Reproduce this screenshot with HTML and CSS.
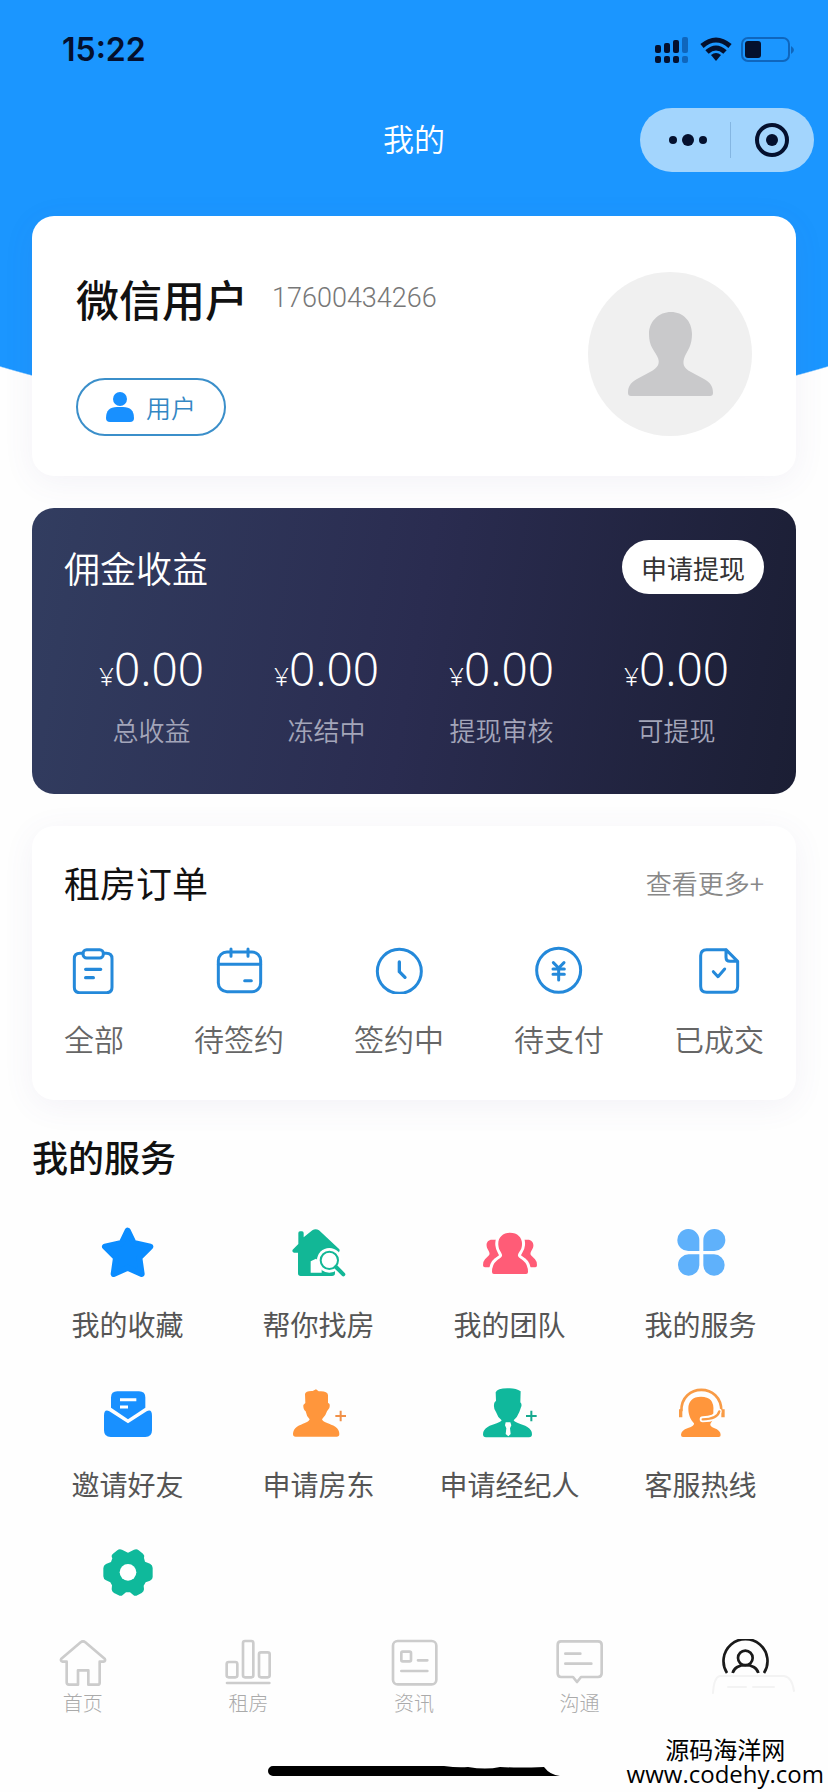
FILE: index.html
```html
<!DOCTYPE html>
<html lang="zh-CN">
<head>
<meta charset="utf-8">
<meta name="viewport" content="width=device-width, initial-scale=1">
<title>我的</title>
<link rel="stylesheet" href="styles.css">
</head>
<body>
<div class="page">
  <header>
    <div class="status">
      <time class="clock">15:22</time>
      <svg class="status-icons" viewBox="652 34 144 32" aria-hidden="true">
        <g fill="#04102e">
          <rect x="655" y="45" width="6" height="8" rx="2"/><rect x="664" y="43" width="6" height="10" rx="2"/><rect x="673" y="40" width="6" height="13" rx="2"/>
          <rect x="655" y="56" width="6" height="7" rx="2"/><rect x="664" y="56" width="6" height="7" rx="2"/><rect x="673" y="56" width="6" height="7" rx="2"/>
          <path d="M716 61l-5-6q5-4 10 0z"/>
          <rect x="745" y="41" width="16" height="17" rx="3"/>
        </g>
        <g fill="#0f66bd"><rect x="682" y="37" width="6" height="16" rx="2"/><rect x="682" y="56" width="6" height="7" rx="2"/><path d="M791 46q6 4 0 8z"/></g>
        <path d="M702 46q14-12 28 0M707 52q9-8 18 0" fill="none" stroke="#04102e" stroke-width="5"/>
        <rect x="742" y="38" width="47" height="23" rx="6" fill="none" stroke="#0f66bd" stroke-width="2"/>
      </svg>
    </div>
    <div class="nav">
      <h1 class="nav-title">我的</h1>
      <div class="capsule">
        <button class="capsule-btn capsule-more" type="button" aria-label="更多">
          <svg viewBox="0 0 40 16" width="40" height="16"><circle cx="5" cy="8" r="4"/><circle cx="20" cy="8" r="6"/><circle cx="35" cy="8" r="4"/></svg>
        </button>
        <button class="capsule-btn capsule-close" type="button" aria-label="关闭">
          <svg viewBox="0 0 36 36" width="36" height="36"><circle cx="18" cy="18" r="15" fill="none" stroke="#04102e" stroke-width="4"/><circle cx="18" cy="18" r="6"/></svg>
        </button>
      </div>
    </div>
  </header>

  <main class="content">
    <section class="card profile">
      <div class="profile-info">
        <div class="profile-line"><h2 class="name">微信用户</h2><span class="phone">17600434266</span></div>
        <button class="role" type="button">
          <svg viewBox="0 0 28 30" width="28" height="30"><circle cx="14" cy="7" r="7"/><path d="M0 26Q0 15 11 15H17Q28 15 28 26Q28 30 24 30H4Q0 30 0 26Z"/></svg>
          用户
        </button>
      </div>
      <svg class="avatar" viewBox="0 0 164 164" role="img" aria-label="头像"><circle cx="82" cy="82" r="82" fill="#f0f0f0"/><path d="M83 40C71 40 61 49 61 62C61 74 66 78 69 84C73 91 70 96 62 100L49 107C42 111 40 115 40 121Q40 124 43 124H122Q125 124 125 121C125 115 123 111 116 107L103 100C95 96 94 91 97 84C100 78 104 73 104 62C104 49 95 40 83 40Z" fill="#c9c9cb"/></svg>
    </section>

    <section class="wallet">
      <div class="section-head"><h2 class="section-title">佣金收益</h2><button class="withdraw" type="button">申请提现</button></div>
      <dl class="amounts">
        <div class="amount"><dd><small>¥</small>0.00</dd><dt>总收益</dt></div>
        <div class="amount"><dd><small>¥</small>0.00</dd><dt>冻结中</dt></div>
        <div class="amount"><dd><small>¥</small>0.00</dd><dt>提现审核</dt></div>
        <div class="amount"><dd><small>¥</small>0.00</dd><dt>可提现</dt></div>
      </dl>
    </section>

    <section class="card orders">
      <div class="section-head"><h2 class="section-title">租房订单</h2><a class="more" href="#">查看更多+</a></div>
      <nav class="order-list">
        <a class="order" href="#">
          <svg viewBox="90 75 144 144"><path d="M129 97H120Q103 97 103 113V199Q103 215 119 215H200Q216 215 216 199V113Q216 97 199 97H190"/><rect x="129" y="86" width="61" height="25" rx="11"/><path d="M137 145H182M137 170H160" stroke-width="10"/></svg>
          全部</a>
        <a class="order" href="#">
          <svg viewBox="525 75 144 144"><rect x="535" y="93" width="127" height="119" rx="26"/><path d="M535 130H662M573 84V106M624 84V106M614 179H634" stroke-width="9"/></svg>
          待签约</a>
        <a class="order" href="#">
          <svg viewBox="1005 75 144 144"><circle cx="1078" cy="151" r="66"/><path d="M1078 123V152L1095 169" stroke-width="10"/></svg>
          签约中</a>
        <a class="order" href="#">
          <svg viewBox="345 75 144 144"><circle cx="416" cy="148" r="66"/><path d="M400 125L416 141L432 125M416 141V177M399 144H433M399 160H433"/></svg>
          待支付</a>
        <a class="order" href="#">
          <svg viewBox="825 75 144 144"><path d="M918 86H860Q842 86 842 104V196Q842 214 860 214H935Q953 214 953 196V121L918 86V109Q918 121 930 121H953M880 152L894 167L914 144"/></svg>
          已成交</a>
      </nav>
    </section>

    <section class="services">
      <h2 class="services-title">我的服务</h2>
      <nav class="service-grid">
        <a class="service" href="#">
          <svg viewBox="180 72 168 168"><path d="M263 92L281 129L331 140L298 173L305 222L263 203L221 222L228 173L195 140L245 129Z" fill="#0a8cff" stroke="#0a8cff" stroke-width="18" stroke-linejoin="round"/></svg>
          我的收藏</a>
        <a class="service" href="#">
          <svg viewBox="753 72 168 168"><path d="M775 99Q775 94 780 94H786Q791 94 791 99V112L817 91Q827 84 837 91L898 148Q901 154 895 158H885V220Q885 228 876 228H782Q774 228 774 220V158H762Q755 156 758 149L775 132Z" fill="#12b796"/><path d="M812 218V184L828 176L845 190V218Z" fill="#fff"/><circle cx="868" cy="181" r="37" fill="#fff"/><path d="M885 196L914 226" stroke="#fff" stroke-width="22"/><circle cx="868" cy="181" r="26" fill="#fff" stroke="#12b796" stroke-width="6"/><path d="M888 201L910 223" stroke="#12b796" stroke-width="12" stroke-linecap="round"/></svg>
          帮你找房</a>
        <a class="service" href="#">
          <svg viewBox="186 72 168 168" fill="#ff5c77"><path d="M216 119C202 119 197 131 201 143C204 152 212 157 207 166L195 178Q189 184 189 196Q189 202 195 202H346Q351 202 351 196Q351 184 345 178L333 166C328 157 336 152 339 143C343 131 337 119 323 119Z"/><path d="M270 98C247 98 233 114 235 135C236 151 244 156 246 164C248 172 237 176 230 182Q216 193 216 216Q216 222 222 222H318Q324 222 324 216Q324 193 310 182C303 176 292 172 294 164C296 156 305 151 306 135C308 114 294 98 270 98Z" stroke="#fff" stroke-width="18" paint-order="stroke"/></svg>
          我的团队</a>
        <a class="service" href="#">
          <svg viewBox="757 72 168 168" fill="#5fb1fb"><path d="M836 153H805A33 33 0 1 1 836 120ZM848 153V120A33 33 0 1 1 880 153ZM836 163V196A32 32 0 1 1 805 163ZM848 163H880A32 32 0 1 1 848 196Z"/></svg>
          我的服务</a>
        <a class="service" href="#">
          <svg viewBox="180 72 168 168" fill="#1890ff"><path d="M213 143V113Q213 94 232 94H297Q316 94 316 113V143L264 178Z"/><path d="M240 119H289M240 141H264" stroke="#fff" stroke-width="9"/><path d="M192 168Q192 146 208 154L264 190L320 154Q336 146 336 168V211Q336 231 316 231H212Q192 231 192 211Z"/></svg>
          邀请好友</a>
        <a class="service" href="#">
          <svg viewBox="753 72 168 168" fill="#ff963c"><path d="M795 102Q797 92 818 93L828 88L836 94Q862 92 864 105V129Q872 130 868 144L861 154Q858 166 846 178C850 188 870 191 886 200Q898 208 898 222Q898 230 890 230H767Q759 230 759 222Q759 208 771 200C787 191 805 188 809 178Q799 168 797 154Q789 148 790 135L796 129Z"/><path d="M886 168H918M902 152V184" stroke="#f09048" stroke-width="6"/></svg>
          申请房东</a>
        <a class="service" href="#">
          <svg viewBox="186 72 168 168" fill="#10b89c"><path d="M227 97Q232 85 262 85Q286 83 302 94L301 127Q307 132 303 142L298 156Q292 172 281 181C286 190 306 191 322 201Q336 209 336 223Q336 232 327 232H198Q189 232 189 223Q189 209 203 201C219 191 240 190 245 181Q233 172 228 156Q219 145 223 128L228 122Z"/><path d="M257 187H271L274 196L270 205L272 222L265 229L257 222L259 205L255 196Z" fill="#fff"/><path d="M318 168H350M334 152V184" stroke="#16a98e" stroke-width="6"/></svg>
          申请经纪人</a>
        <a class="service" href="#">
          <svg viewBox="757 72 168 168" fill="#ff963c"><path d="M841 110C816 110 803 124 803 145C803 165 809 178 820 190Q822 198 802 204Q781 211 781 225Q781 231 787 231H894Q900 231 900 225Q900 211 880 204Q865 198 870 190L878 178V153Q882 110 841 110Z"/><path d="M782 154C780 68 904 68 902 154" fill="none" stroke="#f89b46" stroke-width="8"/><path d="M780 148V172M907 148V172" stroke="#f89b46" stroke-width="10"/><path d="M894 154Q888 178 846 178" fill="none" stroke="#fff" stroke-width="18" stroke-linecap="round"/><path d="M896 154Q890 178 846 178" fill="none" stroke="#f89b46" stroke-width="7" stroke-linecap="round"/></svg>
          客服热线</a>
        <a class="service" href="#" aria-label="设置">
          <svg viewBox="180 552 168 168"><path d="M232 571Q238 565 246 569L264 578L282 569Q290 565 296 571L309 581Q315 586 312 594L315 605L330 611Q338 615 338 624V651Q338 659 330 662L317 667L311 677L312 688Q312 694 305 699L292 706Q285 710 279 704L270 697H258L249 704Q243 710 236 706L222 699Q215 694 215 688L216 676L211 667L198 661Q190 657 190 649V625Q190 616 198 612L213 606L217 595Q212 586 219 581Z" fill="#0fb99b"/><circle cx="264" cy="637" r="25" fill="#fff"/></svg>
        </a>
      </nav>
    </section>
  </main>

  <footer class="tabbar">
    <nav class="tabs">
      <a class="tab" href="#"><svg viewBox="176 88 144 144"><path d="M248 95Q252 95 255 98L313 147Q317 155 309 156H298V219Q298 225 292 225H264V182H233V225H206Q199 225 199 218V156H187Q179 154 183 147L241 98Q244 95 248 95Z"/></svg>首页</a>
      <a class="tab" href="#"><svg viewBox="673 88 144 144"><rect x="681" y="157" width="32" height="46" rx="6"/><rect x="730" y="94" width="31" height="109" rx="6"/><rect x="778" y="128" width="32" height="75" rx="6"/><path d="M682 220H809"/></svg>租房</a>
      <a class="tab" href="#"><svg viewBox="1170 88 144 144"><rect x="1179" y="94" width="130" height="130" rx="14"/><rect x="1204" y="126" width="29" height="29" rx="4"/><path d="M1254 152H1282M1204 184H1282"/></svg>资讯</a>
      <a class="tab" href="#"><svg viewBox="443 88 144 144"><path d="M458 95H569Q580 95 580 106V191Q580 202 569 202H518L506 217L494 202H458Q448 202 448 191V106Q448 95 458 95ZM471 132H516M471 162H549"/></svg>沟通</a>
      <a class="tab" href="#" aria-label="我的" aria-current="page"><svg class="tab-me" viewBox="940 88 144 144"><path d="M958 190A66 66 0 1 1 1069 190M975 190C982 158 1045 158 1052 190"/><circle cx="1013" cy="145" r="22"/></svg><svg class="tab-trace" viewBox="0 0 84 22" aria-hidden="true"><path d="M1 20Q2 4 8 3H72Q80 4 82 18M16 14H34M41 14H62"/></svg></a>
    </nav>
    <svg class="home-bar" viewBox="0 0 292 10" aria-hidden="true"><path d="M5 0H176Q190 2 200 1Q218 4 232 1Q250 2 276 1Q282 9 292 10H5A5 5 0 0 1 5 0Z"/></svg>
    <div class="sitemark"><span>源码海洋网</span><span class="site-url">www.codehy.com</span></div>
  </footer>
</div>
</body>
</html>
```
FILE: styles.css
```css
* { box-sizing: border-box; }

body {
  margin: 0;
  background: #fefefe;
  color: #111;
  font-family: "Noto Sans CJK SC", sans-serif;
}

h1, h2, dl, dd { margin: 0; font-weight: 400; }
a { color: inherit; text-decoration: none; }
button { border: 0; padding: 0; font: inherit; cursor: pointer; }
svg { display: block; flex: none; }

.page {
  display: flex;
  flex-direction: column;
  min-height: 100vh;
  background: radial-gradient(ellipse 100% 424px at 50% 0, #1b96ff 99.7%, transparent 100%) no-repeat;
}

/* Header */
.status {
  display: flex;
  align-items: center;
  justify-content: space-between;
  height: 100px;
  padding: 0 32px 0 62px;
}
.clock { font: 600 32px/40px Inter, sans-serif; color: #04102e; }
.status-icons { width: 144px; height: 32px; }

.nav {
  display: grid;
  grid-template-columns: 1fr auto 1fr;
  align-items: center;
  height: 80px;
  padding: 0 14px;
}
.nav-title {
  grid-column: 2;
  padding-bottom: 4px;
  font-size: 31px;
  line-height: 44px;
  font-weight: 350;
  color: #fff;
}
.capsule {
  justify-self: end;
  display: flex;
  align-items: center;
  width: 174px;
  height: 64px;
  border-radius: 32px;
  background: #a3d5fd;
}
.capsule-btn {
  flex: 1;
  display: flex;
  align-items: center;
  justify-content: center;
  height: 36px;
  background: none;
  fill: #04102e;
}
.capsule-more { padding-left: 6px; }
.capsule-close { border-left: 1px solid #84b6e2; }

/* Cards */
.content {
  display: flex;
  flex-direction: column;
  gap: 32px;
  padding: 36px 32px 0;
}
.card {
  border-radius: 22px;
  background: #fff;
  box-shadow: 0 6px 32px rgba(100, 80, 150, 0.07);
}

.profile {
  display: flex;
  justify-content: space-between;
  padding: 56px 44px 40px;
}
.profile-info {
  display: flex;
  flex-direction: column;
  align-items: flex-start;
  justify-content: space-between;
}
.profile-line { display: flex; align-items: center; gap: 24px; }
.name { font-size: 43px; line-height: 52px; font-weight: 500; }
.phone { font: 300 27px/40px Roboto, sans-serif; color: #777; }
.role {
  display: flex;
  align-items: center;
  justify-content: center;
  gap: 12px;
  width: 150px;
  height: 58px;
  border: 2px solid #3b8fca;
  border-radius: 30px;
  background: #fff;
  color: #3387c4;
  fill: #1890ff;
  font-size: 25px;
  font-weight: 350;
}
.avatar { width: 164px; height: 164px; }

.section-head { display: flex; align-items: center; justify-content: space-between; }
.section-title { font-size: 36px; line-height: 48px; }

.wallet {
  padding: 32px 32px 46px;
  border-radius: 22px;
  background: linear-gradient(100deg, #323d60, #2a2c50 50%, #1b1e34);
  color: #fff;
}
.wallet .section-title { font-weight: 350; }
.withdraw {
  width: 142px;
  height: 54px;
  border-radius: 27px;
  background: #fff;
  color: #333;
  font-size: 26px;
}
.amounts { display: grid; grid-template-columns: repeat(4, 1fr); margin-top: 46px; }
.amount { display: flex; flex-direction: column; gap: 16px; text-align: center; }
.amount dd { font: 300 46px/56px "Noto Sans", sans-serif; }
.amount small { font-size: 26px; line-height: 1; }
.amount dt { font-size: 26px; line-height: 36px; font-weight: 350; color: #a3a5b9; }

.orders { padding: 32px 32px 42px; }
.more { font-size: 26px; font-weight: 350; color: #888; }
.order-list { display: flex; justify-content: space-between; margin-top: 40px; }
.order {
  display: flex;
  flex-direction: column;
  align-items: center;
  gap: 24px;
  font-size: 30px;
  line-height: 40px;
  font-weight: 350;
  color: #666;
}
.order svg {
  width: 48px;
  height: 48px;
  fill: none;
  stroke: #2489da;
  stroke-width: 9;
  stroke-linecap: round;
  stroke-linejoin: round;
}

/* Services */
.services-title { font-size: 36px; line-height: 48px; font-weight: 500; }
.service-grid {
  display: grid;
  grid-template-columns: repeat(4, 1fr);
  row-gap: 40px;
  margin-top: 44px;
}
.service {
  display: flex;
  flex-direction: column;
  align-items: center;
  gap: 24px;
  font-size: 28px;
  line-height: 40px;
  color: #555;
}
.service svg { width: 56px; height: 56px; }

/* Bottom bar */
.tabbar {
  position: relative;
  display: flex;
  flex-direction: column;
  align-items: center;
  margin-top: auto;
  padding-bottom: 16px;
}
.tabs { display: grid; grid-template-columns: repeat(5, 1fr); width: 100%; }
.tab {
  position: relative;
  display: flex;
  flex-direction: column;
  align-items: center;
  gap: 2px;
  font-size: 20px;
  line-height: 28px;
  font-weight: 300;
  color: #aaa;
}
.tab svg {
  width: 48px;
  height: 48px;
  fill: none;
  stroke: #ccc;
  stroke-width: 8;
  stroke-linecap: round;
  stroke-linejoin: round;
}
.tab .tab-me { stroke: #1a1a1a; stroke-width: 8; stroke-linecap: butt; }
.tab .tab-trace {
  position: absolute;
  top: 34px;
  right: 32px;
  width: 84px;
  height: 22px;
  stroke: #f3f3f3;
  stroke-width: 2;
}
.home-bar { width: 292px; height: 10px; margin-top: 49px; }
.sitemark {
  position: absolute;
  right: 4px;
  bottom: 6px;
  display: flex;
  flex-direction: column;
  align-items: center;
  font-size: 24px;
  line-height: 26px;
  color: #000;
}
.site-url { font: 24px/24px "Open Sans", sans-serif; }
```
